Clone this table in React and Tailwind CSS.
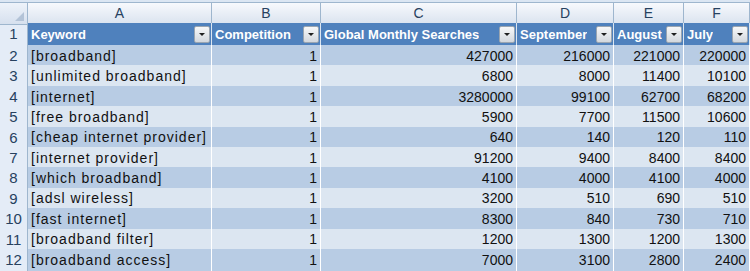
import React from 'react';

const columns = ['A', 'B', 'C', 'D', 'E', 'F'];
const headers = ['Keyword', 'Competition', 'Global Monthly Searches', 'September', 'August', 'July'];

const rows = [
  ['[broadband]', 1, 427000, 216000, 221000, 220000],
  ['[unlimited broadband]', 1, 6800, 8000, 11400, 10100],
  ['[internet]', 1, 3280000, 99100, 62700, 68200],
  ['[free broadband]', 1, 5900, 7700, 11500, 10600],
  ['[cheap internet provider]', 1, 640, 140, 120, 110],
  ['[internet provider]', 1, 91200, 9400, 8400, 8400],
  ['[which broadband]', 1, 4100, 4000, 4100, 4000],
  ['[adsl wireless]', 1, 3200, 510, 690, 510],
  ['[fast internet]', 1, 8300, 840, 730, 710],
  ['[broadband filter]', 1, 1200, 1300, 1200, 1300],
  ['[broadband access]', 1, 7000, 3100, 2800, 2400],
];

// flecha del filtro
function FilterButton() {
  return (
    <div className="ml-auto mr-[1px] flex h-[17px] w-[16px] shrink-0 items-center justify-center rounded-[2px] border border-[#9aa5b1] bg-gradient-to-b from-[#f7f8f9] to-[#d3d8de]">
      <svg width="6" height="3" viewBox="0 0 6 3">
        <path d="M0 0 L6 0 L3 3 Z" fill="#1f1f1f" />
      </svg>
    </div>
  );
}

export default function App() {
  const grid = 'grid grid-cols-[28px_184px_109px_196px_97px_70px_66px]';
  return (
    <div className="h-[271px] w-[750px] overflow-hidden bg-white font-['Liberation_Sans',Arial,sans-serif]">
      <div className="h-[3px] border-b border-[#9eb6ce] bg-[#dbe6f3]" />

      {/* letras de columna */}
      <div className={`${grid} h-[20px]`}>
        <div className="relative border-r border-b border-[#9eb6ce] bg-gradient-to-b from-[#eef3fa] to-[#d6e0ee]">
          <svg className="absolute right-[3px] bottom-[3px]" width="9" height="9" viewBox="0 0 9 9">
            <path d="M9 0 L9 9 L0 9 Z" fill="#b3c3d7" />
          </svg>
        </div>
        {columns.map(c => (
          <div key={c} className="flex items-center justify-center border-r border-b border-[#9eb6ce] bg-gradient-to-b from-[#f7f9fd] to-[#dae3ef] text-[14px] text-[#27415f]">
            {c}
          </div>
        ))}
      </div>

      {/* encabezados de la tabla */}
      <div className={`${grid} h-[22px]`}>
        <div className="flex items-center justify-center border-r border-b border-[#9eb6ce] bg-[#e4ecf7] text-[15px] text-[#27415f]">1</div>
        {headers.map(h => (
          <div key={h} className="flex items-center border-r border-b border-[#dce6f1] bg-[#4f81bd] pl-[3px] text-[13px] font-bold text-white">
            <span className="truncate">{h}</span>
            <FilterButton />
          </div>
        ))}
      </div>

      {rows.map((r, i) => {
        const bg = i % 2 === 0 ? 'bg-[#b8cce4]' : 'bg-[#dce6f1]';
        return (
          <div key={i} className={`${grid} h-[20.4px]`}>
            <div className="flex items-center justify-center border-r border-b border-[#9eb6ce] bg-[#e4ecf7] text-[15px] text-[#27415f]">{i + 2}</div>
            {r.map((v, j) => (
              <div
                key={j}
                className={`flex items-center border-r border-b border-white ${bg} px-[3px] text-[14px] text-[#111] ${j === 0 ? 'justify-start tracking-[1px]' : 'justify-end'}`}
              >
                {v}
              </div>
            ))}
          </div>
        );
      })}
    </div>
  );
}
